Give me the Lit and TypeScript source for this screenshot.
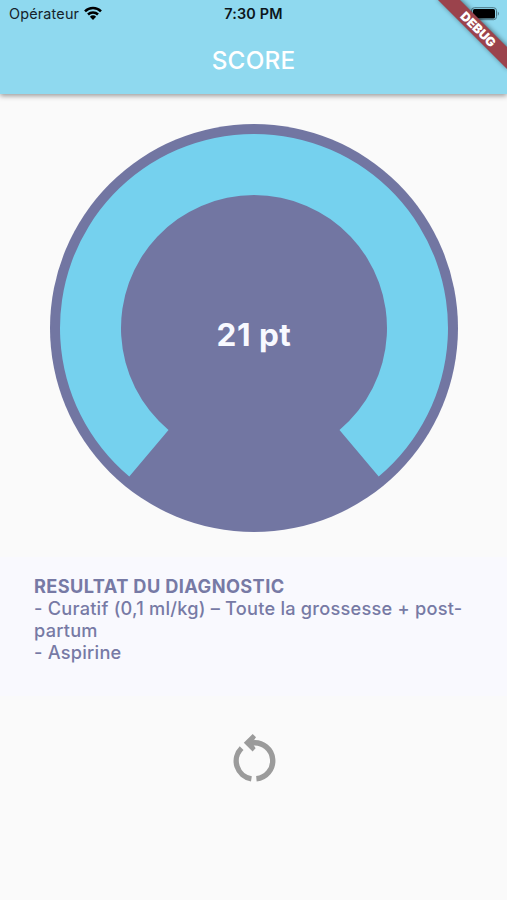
import { LitElement, html, css } from "lit";
import { customElement } from "lit/decorators.js";

@customElement("status-bar")
class StatusBar extends LitElement {
  static styles = css`
    :host { display: grid; grid-template-columns: 1fr auto 1fr; height: 27px; align-items: center; padding: 0 7px 0 9px; color: #15232b; font-size: 14.4px; }
    .carrier { display: flex; align-items: center; gap: 5px; letter-spacing: 0.18px; }
    .carrier svg { margin-top: -2px; }
    .time { font-weight: 600; color: #0c161b; letter-spacing: 0.2px; margin-right: 2px; }
    .battery { justify-self: end; display: flex; }
  `;
  render() {
    return html`
      <div class="carrier"><span>Opérateur</span>
        <svg width="18" height="14" viewBox="0 0 18 14">
          <g fill="none" stroke="#000" stroke-width="2.5">
            <path d="M1 5.3A11.3 11.3 0 0 1 17 5.3" />
            <path d="M4 8.5A7.1 7.1 0 0 1 14 8.5" />
          </g>
          <path d="M9 14L5.9 10.8A4.5 4.5 0 0 1 12.1 10.8Z" />
        </svg>
      </div>
      <div class="time">7:30 PM</div>
      <svg class="battery" width="30" height="14" viewBox="0 0 30 14">
        <rect x="1.5" y="0.7" width="25" height="12" rx="3" fill="none" stroke="#4b7584" />
        <rect x="3" y="2" width="22" height="9.4" rx="1.5" />
        <path d="M27.8 4.6Q30 6.7 27.8 8.8Z" fill="#4b7584" />
      </svg>`;
  }
}

@customElement("score-gauge")
class ScoreGauge extends LitElement {
  static styles = css`
    :host { display: grid; width: 408px; height: 408px; place-items: center; border-radius: 50%; background: #7276a2; }
    svg, .value { grid-area: 1 / 1; }
    .value { color: #f8f9ff; font-size: 31.5px; font-weight: 700; line-height: 36px; margin-top: 13px; letter-spacing: 0.5px; }
  `;
  private point(radius: number, degrees: number) {
    const a = (degrees * Math.PI) / 180;
    return `${204 + radius * Math.sin(a)} ${204 + radius * Math.cos(a)}`;
  }
  render() {
    const outer = 194, inner = 133, half = 40;
    const d = `M${this.point(outer, -half)}A${outer} ${outer} 0 1 1 ${this.point(outer, half)}L${this.point(inner, half)}A${inner} ${inner} 0 1 0 ${this.point(inner, -half)}Z`;
    return html`<svg width="408" height="408"><path d=${d} fill="#75d1ee" /></svg><div class="value">21 pt</div>`;
  }
}

@customElement("app-root")
class AppRoot extends LitElement {
  static styles = css`
    :host { display: flex; flex-direction: column; position: relative; overflow: hidden; width: 507px; height: 900px; background: #fafafa; font-family: Inter, "Liberation Sans", sans-serif; }
    header { flex: none; height: 94px; background: #8fd9ef; box-shadow: 0 2px 5px rgba(0, 0, 0, 0.38); }
    h1 { margin: 0; height: 66px; line-height: 66px; text-align: center; color: #fff; font-size: 24.3px; font-weight: 500; letter-spacing: 0.2px; }
    main { display: flex; flex-direction: column; align-items: center; padding-top: 30px; }
    score-gauge { margin-left: 1px; }
    .result { box-sizing: border-box; width: 100%; height: 139px; margin-top: 25px; padding: 18px 34px; background: #f9f9fe; color: #777aa5; font-size: 18.2px; line-height: 22px; font-weight: 500; letter-spacing: 0.23px; }
    .result p { margin: 0; }
    .result .title { font-weight: 700; letter-spacing: 0.4px; }
    button { display: flex; margin: 36px 0 0 1px; padding: 0; border: 0; background: none; }
    .ribbon { position: absolute; top: 0; right: 0; }
    .debug { font-size: 12.5px; font-weight: 900; fill: #fff; }
  `;
  render() {
    return html`
      <header><status-bar></status-bar><h1>SCORE</h1></header>
      <main>
        <score-gauge></score-gauge>
        <section class="result">
          <p class="title">RESULTAT DU DIAGNOSTIC</p>
          <p>- Curatif (0,1 ml/kg) – Toute la grossesse + post-partum</p>
          <p>- Aspirine</p>
        </section>
        <button aria-label="Recommencer">
          <svg width="44" height="52" viewBox="232 732 44 52">
            <g fill="none" stroke="#9b9b9b" stroke-width="5.4">
              <path d="M241.6 748.2A18 18 0 0 0 251.4 778.8" />
              <path d="M256.4 778.8A18 18 0 0 0 253 742.9H247" />
            </g>
            <path d="M243.8 742.7L252.7 733.9L256 737.2L252.2 742.7L255.6 748.2L252.6 751.4Z" fill="#9b9b9b" />
          </svg>
        </button>
      </main>
      <svg class="ribbon" width="90" height="90" viewBox="417 0 90 90">
        <defs><filter id="shade" x="-20%" y="-20%" width="140%" height="140%"><feGaussianBlur stdDeviation="2.5" /></filter></defs>
        <path d="M437 -2L509 70V48L459 -2Z" fill="#000" opacity=".5" filter="url(#shade)" />
        <path d="M436 -2L509 71V49L458 -2Z" fill="#9b434c" />
        <text class="debug" transform="translate(478 29.5) rotate(45)" text-anchor="middle" y="4.2" textLength="44" lengthAdjust="spacingAndGlyphs">DEBUG</text>
      </svg>`;
  }
}
